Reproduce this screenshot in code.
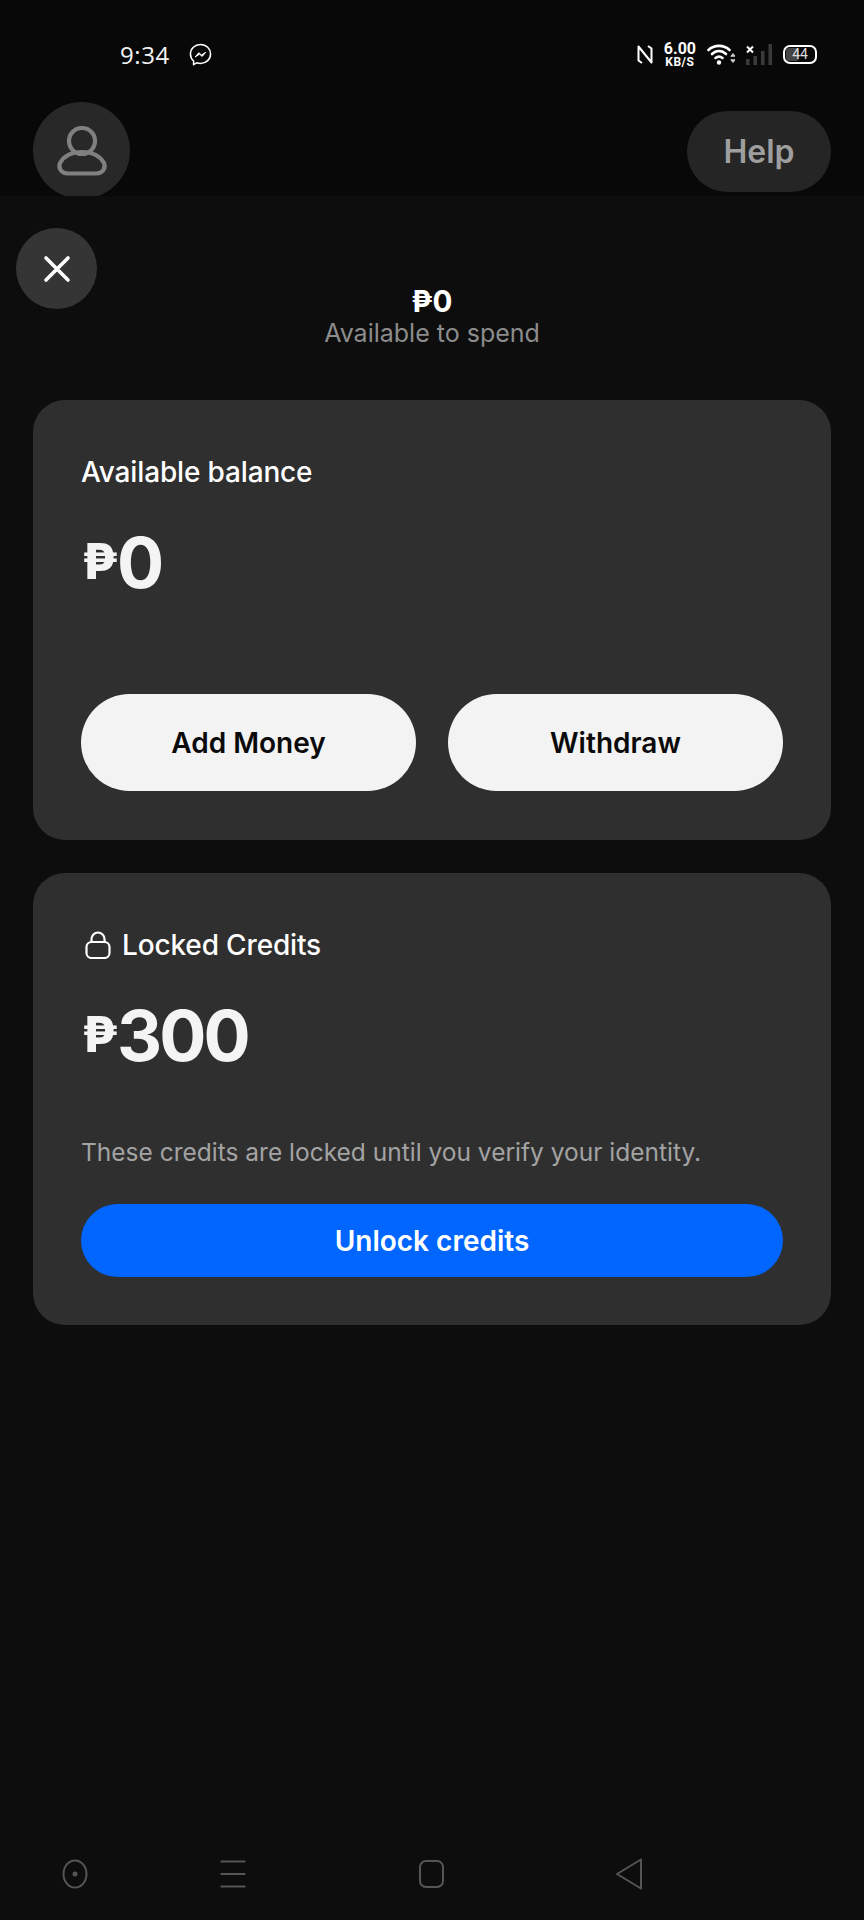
<div class="screen">
  <div class="top">
    <div class="status">
      <div class="status-left">
        <span class="time">9:34</span>
        <svg class="messenger" width="23" height="23" viewBox="0 0 24 24" fill="none">
          <path d="M12 1.500C6 1.500 1.500 5.900 1.500 11.500c0 3 1.200 5.500 3.300 7.300v3.700l3.400-1.800c1.200.4 2.500.6 3.800.6 6 0 10.500-4.400 10.500-9.800S18 1.500 12 1.500Z" stroke="#fff" stroke-width="1.600"/>
          <path d="M6.500 14.500l3.700-4.300 2.800 2.300 4.500-2.800-3.700 4.300-2.800-2.300Z" fill="#fff" stroke="#fff" stroke-width="1"/>
        </svg>
      </div>
      <div class="status-right">
        <svg width="16" height="21" viewBox="0 0 16 21" fill="none" stroke="#fff" stroke-width="2" stroke-linejoin="round">
          <path d="M5 19 1.500 16.500V2.500L14.500 18.500V4.500L11 2"/>
        </svg>
        <div class="speed"><span class="speed-num">6.00</span><span class="speed-unit">KB/S</span></div>
        <svg width="28" height="22" viewBox="0 0 28 22" fill="none" stroke="#fff" stroke-width="2.600" stroke-linecap="round">
          <path d="M1.500 7C7 1.500 17 1.500 22.500 7"/>
          <path d="M5 11C9 7 15 7 19 11"/>
          <path d="M8.500 15c2-1.500 5-1.500 7 0"/>
          <circle cx="12" cy="19.500" r="2.200" fill="#fff" stroke="none"/>
          <path d="M24 13l2-2.500 2 2.500Z" fill="#ccc" stroke="#ccc" stroke-width="1"/>
          <path d="M24 17l2 2.500 2-2.500Z" fill="#ccc" stroke="#ccc" stroke-width="1"/>
        </svg>
        <svg width="26" height="21" viewBox="0 0 26 21">
          <path d="M1 2.500l6 6M7 2.500l-6 6" stroke="#fff" stroke-width="2"/>
          <rect x="0" y="15" width="3.500" height="6" fill="#3a3a3a"/>
          <rect x="7.500" y="12" width="3.500" height="9" fill="#3a3a3a"/>
          <rect x="15" y="7" width="3.500" height="14" fill="#3a3a3a"/>
          <rect x="22.500" y="0" width="3.500" height="21" fill="#3a3a3a"/>
        </svg>
        <div class="battery"><span class="fill"></span><span class="level">44</span></div>
      </div>
    </div>
    <div class="topbar">
      <div class="avatar">
        <svg width="52" height="50" viewBox="0 0 52 50" fill="none" stroke="#808080" stroke-width="4.200" stroke-linejoin="round">
          <circle cx="26" cy="15" r="13"/>
          <path d="M12 47.500C5 47.500 2 42 4 37 8 30 16 26 26 26S44 30 48 37C50 42 47 47.500 40 47.500Z"/>
        </svg>
      </div>
      <div class="help">Help</div>
    </div>
  </div>

  <div class="sheet">
    <button class="close" aria-label="Close">
      <svg width="28" height="28" viewBox="0 0 28 28" stroke="#fff" stroke-width="3.600" stroke-linecap="round">
        <path d="M3 3l22 22M25 3 3 25"/>
      </svg>
    </button>

    <div class="summary">
      <div class="summary-amount">₱0</div>
      <div class="summary-label">Available to spend</div>
    </div>

    <section class="card">
      <div class="card-title">Available balance</div>
      <div class="amount"><span class="peso">₱</span>0</div>
      <div class="actions">
        <button class="pill">Add Money</button>
        <button class="pill">Withdraw</button>
      </div>
    </section>

    <section class="card locked">
      <div class="card-title">
        <svg class="lock" width="26" height="28" viewBox="0 0 26 28" fill="none" stroke="#fff" stroke-width="2.200">
          <rect x="1.500" y="11" width="23" height="16" rx="5"/>
          <path d="M6.500 11V8a6.500 6.500 0 0 1 13 0v3"/>
        </svg>
        Locked Credits
      </div>
      <div class="amount"><span class="peso">₱</span>300</div>
      <p class="note">These credits are locked until you verify your identity.</p>
      <button class="unlock">Unlock credits</button>
    </section>

    <nav class="nav">
      <svg width="28" height="32" viewBox="0 0 28 32" fill="none" stroke="#555" stroke-width="2">
        <ellipse cx="14" cy="16" rx="11.500" ry="13.500"/>
        <circle cx="14" cy="16" r="2.500" fill="#555" stroke="none"/>
      </svg>
      <svg width="28" height="32" viewBox="0 0 28 32" stroke="#555" stroke-width="2">
        <path d="M1.500 3.500h25M1.500 16h25M1.500 28.500h25"/>
      </svg>
      <svg width="28" height="32" viewBox="0 0 28 32" fill="none" stroke="#555" stroke-width="2">
        <rect x="3" y="3" width="23" height="26" rx="6"/>
      </svg>
      <svg width="28" height="32" viewBox="0 0 28 32" fill="none" stroke="#555" stroke-width="2" stroke-linejoin="round">
        <path d="M26 1.500 2 16l24 14.500Z"/>
      </svg>
    </nav>
  </div>
</div>

<style>
  :global(body) {
    margin: 0;
    background: #0d0d0d;
  }

  .screen {
    width: 864px;
    height: 1920px;
    display: flex;
    flex-direction: column;
    font-family: Inter, "Liberation Sans", sans-serif;
    color: #fff;
    overflow: hidden;
  }

  .top {
    height: 196px;
    background: #080808;
    overflow: hidden;
    flex-shrink: 0;
  }

  .status {
    height: 102px;
    box-sizing: border-box;
    padding: 39px 47px 0 120px;
    display: flex;
    justify-content: space-between;
    align-items: flex-start;
  }

  .status-left {
    display: flex;
    align-items: center;
    gap: 19px;
    height: 30px;
  }

  .time {
    font-family: "Open Sans", sans-serif;
    font-size: 24px;
    letter-spacing: 0.6px;
    color: #f4f4f4;
  }

  .status-right {
    display: flex;
    align-items: center;
    gap: 11px;
    height: 30px;
  }

  .speed {
    display: flex;
    flex-direction: column;
    align-items: center;
    font-family: Roboto, sans-serif;
    font-weight: 700;
    line-height: 1;
  }

  .speed-num { font-size: 16px; }
  .speed-unit { font-size: 12px; letter-spacing: 0.5px; margin-top: -1px; }

  .battery {
    position: relative;
    box-sizing: border-box;
    width: 34px;
    height: 19px;
    border: 2px solid #fff;
    border-radius: 7px;
    display: flex;
    align-items: center;
    justify-content: center;
  }

  .fill {
    position: absolute;
    left: 1px;
    top: 1px;
    bottom: 1px;
    width: 13px;
    border-radius: 3px;
    background: #444;
  }

  .level {
    position: relative;
    font-family: Roboto, sans-serif;
    font-size: 14px;
    color: #ddd;
  }

  .topbar {
    display: flex;
    justify-content: space-between;
    align-items: flex-start;
    padding: 0 33px;
  }

  .avatar {
    width: 97px;
    height: 97px;
    border-radius: 50%;
    background: #282828;
    display: flex;
    align-items: center;
    justify-content: center;
  }

  .help {
    margin-top: 9px;
    width: 144px;
    height: 81px;
    border-radius: 41px;
    background: #252525;
    color: #9e9e9e;
    font-size: 32px;
    font-weight: 600;
    display: flex;
    align-items: center;
    justify-content: center;
  }

  .sheet {
    position: relative;
    flex: 1;
    background: #0d0d0d;
    display: flex;
    flex-direction: column;
    padding: 0 33px;
  }

  .close {
    position: absolute;
    left: 16px;
    top: 32px;
    width: 81px;
    height: 81px;
    border: 0;
    border-radius: 50%;
    background: #353535;
    display: flex;
    align-items: center;
    justify-content: center;
    padding: 0;
  }

  .summary {
    padding-top: 90px;
    height: 114px;
    text-align: center;
  }

  .summary-amount {
    font-size: 29.500px;
    font-weight: 700;
    line-height: 30px;
  }

  .summary-label {
    font-size: 25px;
    line-height: 34px;
    color: #8c8c8c;
  }

  .card {
    background: #2f2f2f;
    border-radius: 32px;
    padding: 48px 48px 49px;
    display: flex;
    flex-direction: column;
  }

  .locked {
    margin-top: 33px;
    padding-bottom: 48px;
  }

  .card-title {
    display: flex;
    align-items: center;
    gap: 11px;
    font-size: 28px;
    font-weight: 450;
    letter-spacing: -0.15px;
    line-height: 48px;
    height: 48px;
  }

  .lock {
    margin-left: 4px;
  }

  .amount {
    font-size: 70px;
    font-weight: 700;
    letter-spacing: -3px;
    line-height: 88px;
    margin-top: 23px;
    color: #f4f4f4;
  }

  .peso {
    font-size: 49px;
    font-weight: 800;
    line-height: 0;
    letter-spacing: 0;
    vertical-align: 9px;
    margin-left: 1px;
    margin-right: -1px;
  }

  .actions {
    display: flex;
    gap: 32px;
    margin-top: 87px;
  }

  .pill {
    flex: 1;
    height: 97px;
    border: 0;
    border-radius: 49px;
    background: #f3f3f3;
    color: #0a0a0a;
    font: 600 28px Inter, sans-serif;
  }

  .note {
    margin: 54px 0 0;
    font-size: 24.500px;
    line-height: 36px;
    color: #a3a3a3;
  }

  .unlock {
    margin-top: 34px;
    height: 73px;
    border: 0;
    border-radius: 37px;
    background: #0066ff;
    color: #fff;
    font: 600 28px Inter, sans-serif;
  }

  .nav {
    margin-top: auto;
    margin-bottom: 30px;
    padding-left: 28px;
    display: flex;
    gap: 130px;
    align-items: center;
  }

  .nav svg:nth-child(n + 3) {
    margin-left: 40px;
  }
</style>
